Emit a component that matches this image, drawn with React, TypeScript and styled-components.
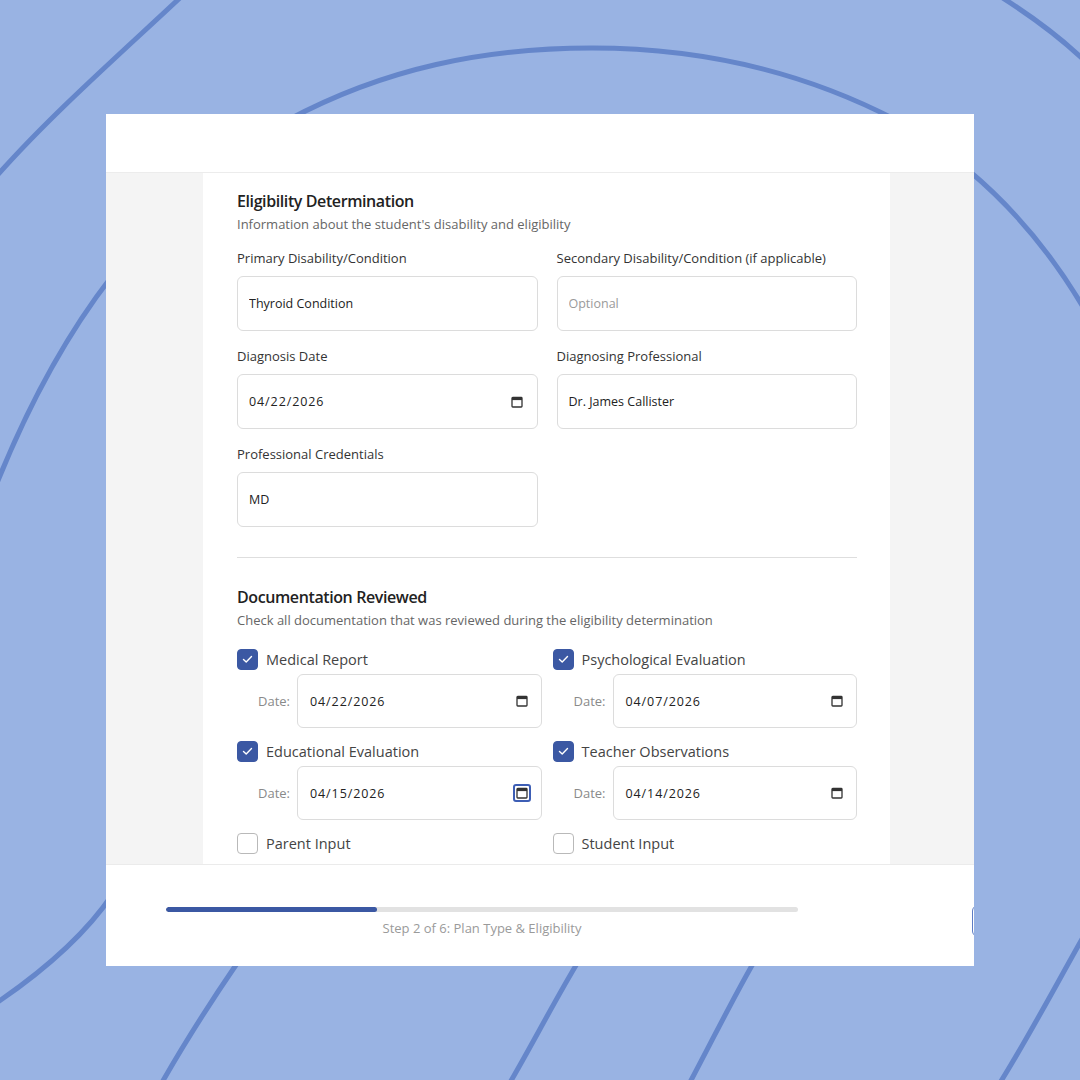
import React from 'react';
import styled, { createGlobalStyle, css } from 'styled-components';

const GlobalStyle = createGlobalStyle`
  * {
    box-sizing: border-box;
  }

  body {
    margin: 0;
    background: #99b3e3;
    font-family: "Open Sans", Lato, "Liberation Sans", sans-serif;
    -webkit-font-smoothing: antialiased;
  }
`;

const Page = styled.div`
  position: relative;
  width: 1080px;
  height: 1080px;
  overflow: hidden;
  display: flex;
  justify-content: center;
  align-items: flex-start;
  padding-top: 114px;
  background: #99b3e3;
`;

const Backdrop = styled.svg`
  position: absolute;
  inset: 0;
  width: 1080px;
  height: 1080px;
`;

const Card = styled.div`
  position: relative;
  width: 868px;
  height: 852px;
  background: #ffffff;
  display: flex;
  flex-direction: column;
  overflow: hidden;
`;

const TopBar = styled.div`
  flex: 0 0 59px;
  border-bottom: 1px solid #ececec;
`;

const Body = styled.div`
  flex: 1;
  min-height: 0;
  background: #f4f4f4;
  display: flex;
  justify-content: center;
  padding-left: 13px;
  overflow: hidden;
`;

const Sheet = styled.div`
  width: 687px;
  flex-shrink: 0;
  background: #ffffff;
  padding: 17px 33px 0 34px;
`;

const SectionTitle = styled.h2`
  margin: 0;
  font-size: 16px;
  line-height: 22px;
  font-weight: 600;
  color: #222222;
  letter-spacing: -0.4px;
`;

const SectionHint = styled.p`
  margin: 3px 0 0;
  font-size: 13px;
  line-height: 18px;
  color: #666666;
`;

const FieldGrid = styled.div`
  display: grid;
  grid-template-columns: 1fr 1fr;
  column-gap: 19px;
  row-gap: 16px;
  margin-top: 16px;
`;

const Field = styled.div`
  display: flex;
  flex-direction: column;
  gap: 9px;
`;

const Label = styled.label`
  font-size: 13px;
  line-height: 18px;
  color: #333333;
`;

const boxStyle = css`
  height: 55px;
  border: 1px solid #dcdcdc;
  border-radius: 6px;
  background: #ffffff;
  font-family: inherit;
  font-size: 12.5px;
  color: #222222;
`;

const TextBox = styled.input`
  ${boxStyle}
  width: 100%;
  padding: 0 11px;
  outline: none;

  &::placeholder {
    color: #9a9a9a;
  }
`;

const DateBox = styled.div<{ $compact?: boolean }>`
  ${boxStyle}
  height: ${({ $compact }) => ($compact ? '54px' : '55px')};
  flex: 1;
  display: flex;
  align-items: center;
  justify-content: space-between;
  padding: 0 ${({ $compact }) => ($compact ? '12px' : '14px')} 0
    ${({ $compact }) => ($compact ? '12px' : '11px')};
  letter-spacing: 0.9px;
`;

const IconWrap = styled.span<{ $focused?: boolean }>`
  display: inline-flex;
  padding: 1px;
  border-radius: 1px;
  outline: ${({ $focused }) => ($focused ? '2px solid #3d5eb5' : 'none')};
`;

const Divider = styled.hr`
  margin: 30px 0 0;
  border: none;
  border-top: 1px solid #dedede;
`;

const SecondTitle = styled(SectionTitle)`
  margin-top: 28px;
`;

const DocGrid = styled.div`
  display: grid;
  grid-template-columns: 1fr 1fr;
  column-gap: 11px;
  row-gap: 12px;
  margin-top: 19px;
`;

const DocItem = styled.div`
  display: flex;
  flex-direction: column;
  gap: 4px;
`;

const CheckRow = styled.div`
  display: flex;
  align-items: center;
  gap: 8px;
  height: 22px;
`;

const CheckBox = styled.span<{ $checked: boolean }>`
  width: 21px;
  height: 21px;
  border-radius: 4px;
  display: inline-flex;
  align-items: center;
  justify-content: center;
  flex-shrink: 0;
  background: ${({ $checked }) => ($checked ? '#3b58a3' : '#ffffff')};
  border: 1px solid ${({ $checked }) => ($checked ? '#3b58a3' : '#b9b9b9')};
`;

const CheckLabel = styled.span`
  font-size: 14.5px;
  color: #444444;
`;

const DateRow = styled.div`
  display: flex;
  align-items: center;
  gap: 7px;
  padding-left: 21px;
`;

const DateCaption = styled.span`
  font-size: 13px;
  color: #8a8a8a;
`;

const Footer = styled.div`
  flex: 0 0 102px;
  border-top: 1px solid #ebebeb;
  display: flex;
  align-items: flex-start;
  padding: 40px 0 0 60px;
`;

const Progress = styled.div`
  flex: 0 0 632px;
  margin-top: 2px;
  display: flex;
  flex-direction: column;
  align-items: center;
  gap: 8px;
`;

const Track = styled.div`
  width: 100%;
  height: 5px;
  border-radius: 3px;
  background: #e2e2e2;
  overflow: hidden;
`;

const Fill = styled.div`
  height: 100%;
  background: #3b58a3;
  border-radius: 3px;
`;

const StepText = styled.span`
  font-size: 13px;
  line-height: 16px;
  color: #9a9a9a;
`;

const NextButton = styled.button`
  flex-shrink: 0;
  margin-left: 174px;
  width: 110px;
  height: 32px;
  border: 1px solid #5d7cc4;
  border-radius: 6px;
  background: #ffffff;
`;

const CalendarIcon = () => (
  <svg width="12" height="12" viewBox="0 0 12 12">
    <rect x="1" y="1.5" width="10" height="9.5" rx="0.8" fill="none" stroke="#333" strokeWidth="1.3" />
    <rect x="1" y="1.5" width="10" height="2.6" fill="#333" />
  </svg>
);

const Check = () => (
  <svg width="11" height="9" viewBox="0 0 11 9">
    <polyline points="1.5,4.5 4.2,7 9.5,1.6" fill="none" stroke="#ffffff" strokeWidth="1.4" strokeLinecap="round" strokeLinejoin="round" />
  </svg>
);

interface DocEntry {
  name: string;
  checked: boolean;
  date?: string;
  focused?: boolean;
}

const docs: DocEntry[] = [
  { name: 'Medical Report', checked: true, date: '04/22/2026' },
  { name: 'Psychological Evaluation', checked: true, date: '04/07/2026' },
  { name: 'Educational Evaluation', checked: true, date: '04/15/2026', focused: true },
  { name: 'Teacher Observations', checked: true, date: '04/14/2026' },
  { name: 'Parent Input', checked: false },
  { name: 'Student Input', checked: false },
];

const lines = [
  'M 183 -5 C 130 45, 50 115, -5 178',
  'M 112 276 C 70 330, 30 400, -5 488',
  'M -5 1004 C 45 970, 85 935, 112 895',
  'M 160 1086 C 186 1040, 212 1000, 238 962',
  'M 508 1086 C 532 1045, 555 1000, 578 962',
  'M 688 1086 C 710 1045, 732 1000, 754 962',
  'M 998 1086 C 1027 1040, 1056 985, 1086 932',
  'M 288 120 C 385 68, 485 48, 592 48 C 700 48, 800 70, 896 120',
  'M 998 -5 C 1030 15, 1060 37, 1086 62',
  'M 968 170 C 1010 205, 1050 250, 1086 312',
];

export default function App() {
  return (
    <>
      <GlobalStyle />
      <Page>
        <Backdrop viewBox="0 0 1080 1080">
          {lines.map((d) => (
            <path key={d} d={d} fill="none" stroke="#6586ca" strokeWidth="5" />
          ))}
        </Backdrop>
        <Card>
          <TopBar />
          <Body>
            <Sheet>
              <SectionTitle>Eligibility Determination</SectionTitle>
              <SectionHint>Information about the student's disability and eligibility</SectionHint>
              <FieldGrid>
                <Field>
                  <Label>Primary Disability/Condition</Label>
                  <TextBox readOnly value="Thyroid Condition" />
                </Field>
                <Field>
                  <Label>Secondary Disability/Condition (if applicable)</Label>
                  <TextBox readOnly placeholder="Optional" />
                </Field>
                <Field>
                  <Label>Diagnosis Date</Label>
                  <DateBox>
                    <span>04/22/2026</span>
                    <CalendarIcon />
                  </DateBox>
                </Field>
                <Field>
                  <Label>Diagnosing Professional</Label>
                  <TextBox readOnly value="Dr. James Callister" />
                </Field>
                <Field>
                  <Label>Professional Credentials</Label>
                  <TextBox readOnly value="MD" />
                </Field>
              </FieldGrid>

              <Divider />

              <SecondTitle>Documentation Reviewed</SecondTitle>
              <SectionHint>Check all documentation that was reviewed during the eligibility determination</SectionHint>
              <DocGrid>
                {docs.map((doc) => (
                  <DocItem key={doc.name}>
                    <CheckRow>
                      <CheckBox $checked={doc.checked}>{doc.checked && <Check />}</CheckBox>
                      <CheckLabel>{doc.name}</CheckLabel>
                    </CheckRow>
                    {doc.date && (
                      <DateRow>
                        <DateCaption>Date:</DateCaption>
                        <DateBox $compact>
                          <span>{doc.date}</span>
                          <IconWrap $focused={doc.focused}>
                            <CalendarIcon />
                          </IconWrap>
                        </DateBox>
                      </DateRow>
                    )}
                  </DocItem>
                ))}
              </DocGrid>
            </Sheet>
          </Body>
          <Footer>
            <Progress>
              <Track>
                <Fill style={{ width: `${(2 / 6) * 100}%` }} />
              </Track>
              <StepText>Step 2 of 6: Plan Type &amp; Eligibility</StepText>
            </Progress>
            <NextButton />
          </Footer>
        </Card>
      </Page>
    </>
  );
}
